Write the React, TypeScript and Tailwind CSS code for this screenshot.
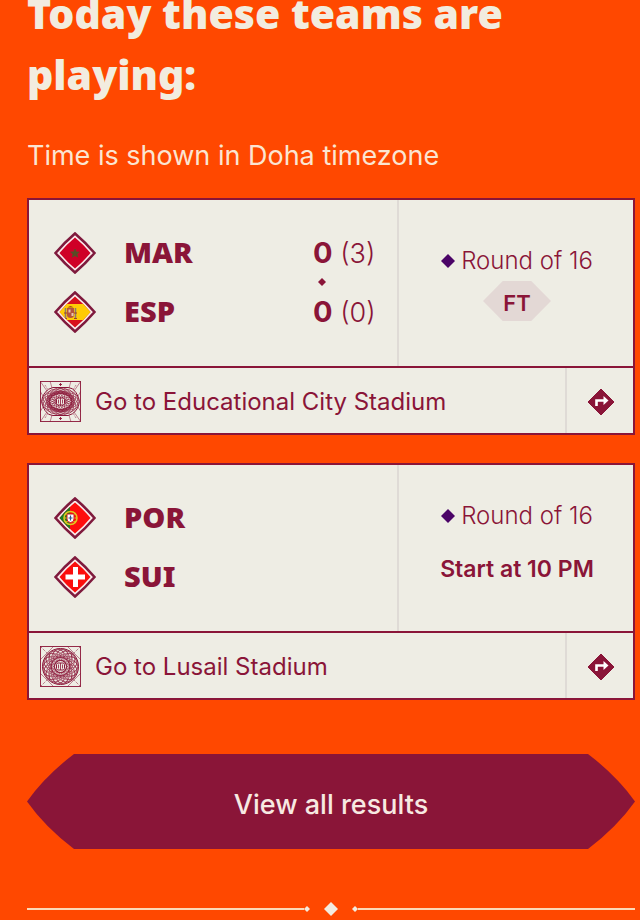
import type { ReactNode } from 'react';

type TeamCode = 'MAR' | 'ESP' | 'POR' | 'SUI';
type StadiumShape = 'oval' | 'round';

interface Team {
  code: TeamCode;
  goals?: number;
  penalties?: number;
}

interface Match {
  teams: [Team, Team];
  round: string;
  startsAt?: string;
  stadium: string;
  shape: StadiumShape;
}

const MATCHES: Match[] = [
  {
    teams: [
      { code: 'MAR', goals: 0, penalties: 3 },
      { code: 'ESP', goals: 0, penalties: 0 },
    ],
    round: 'Round of 16',
    stadium: 'Educational City Stadium',
    shape: 'oval',
  },
  {
    teams: [{ code: 'POR' }, { code: 'SUI' }],
    round: 'Round of 16',
    startsAt: '10 PM',
    stadium: 'Lusail Stadium',
    shape: 'round',
  },
];

// Flag artwork, drawn on a 42x42 canvas and clipped to the inner diamond
const FLAGS: Record<TeamCode, ReactNode> = {
  MAR: (
    <>
      <rect width="42" height="42" fill="#cf0027" />
      <path d="M21 17l1.2 2.9 3.1.2-2.4 2 .8 3-2.7-1.6-2.7 1.6.8-3-2.4-2 3.1-.2z" fill="#5c4a26" stroke="#4b5a2a" strokeWidth=".7" />
    </>
  ),
  ESP: (
    <>
      <rect width="42" height="42" fill="#d8101c" />
      <rect y="13" width="42" height="16" fill="#ffcb05" />
      <path d="M13 17h7v7q0 3-3.500 3T13 24z" fill="#b5533c" />
      <path d="M14.500 18.500h2v3h-2zM17.500 22h2v3h-2z" fill="#e8c9b0" />
      <path d="M11.500 17v10M21.500 17v10" stroke="#8a7a70" strokeWidth="1.500" />
      <path d="M10 22h3M20 22h3M10 27.500h3M20 27.500h3" stroke="#a23c2c" />
      <path d="M13.500 16.500q3-3 6 0z" fill="#9a4a1c" />
    </>
  ),
  POR: (
    <>
      <rect width="42" height="42" fill="#ff0d0d" />
      <rect width="16" height="42" fill="#1c7a26" />
      <circle cx="16.500" cy="21" r="6.500" fill="none" stroke="#e0c81e" strokeWidth="1.500" />
      <path d="M10 21h13M11.500 17q5 3 10 0M11.500 25q5-3 10 0" stroke="#e0c81e" fill="none" />
      <path d="M13 17h7v5q0 3.500-3.500 3.500T13 22z" fill="#fff" stroke="#d31b1b" />
      <path d="M16.500 18.500v5M14.500 21h4" stroke="#38508c" strokeWidth="1.200" />
    </>
  ),
  SUI: (
    <>
      <rect width="42" height="42" fill="#fb0d0d" />
      <path d="M19 11h5v7.500h7v5h-7V31h-5v-7.500h-7.500v-5H19z" fill="#fff" />
    </>
  ),
};

function Flag({ code }: { code: TeamCode }) {
  return (
    <svg viewBox="0 0 42 42" className="size-[42px] shrink-0" role="img" aria-label={code}>
      <clipPath id={`flag-${code}`}>
        <path d="M21 5.500Q29.500 12.500 36.500 21Q29.500 29.500 21 36.500Q12.500 29.500 5.500 21Q12.500 12.500 21 5.500z" />
      </clipPath>
      <path d="M21 1.500Q31.500 10.500 40.500 21Q31.500 31.500 21 40.500Q10.500 31.500 1.500 21Q10.500 10.500 21 1.500z" fill="#fbeeee" stroke="#7f1a3d" strokeWidth="2.600" />
      <g clipPath={`url(#flag-${code})`}>{FLAGS[code]}</g>
    </svg>
  );
}

function Diamond({ className }: { className: string }) {
  return (
    <svg viewBox="0 0 14 14" className={`shrink-0 ${className}`} fill="currentColor" aria-hidden="true">
      <path d="M7 0l7 7-7 7-7-7z" />
    </svg>
  );
}

// Woven line pattern, a different outline for each stadium
function StadiumMark({ shape }: { shape: StadiumShape }) {
  const turns = Array.from({ length: 9 }, (_, i) => i * 20);

  return (
    <svg viewBox="0 0 41 41" className="size-[41px] shrink-0" fill="none" stroke="#8a1538" strokeWidth=".5" aria-hidden="true">
      <rect x=".5" y=".5" width="40" height="40" strokeWidth=".9" />
      {shape === 'oval' ? (
        <>
          <path d="M0 0l7 10M0 41l7-10M41 0l-7 10M41 41l-7-10M10 0l2 7M31 0l-2 7M10 41l2-7M31 41l-2-7M0 10l3 5M41 10l-3 5M0 31l3-5M41 31l-3-5" />
          <path d="M5 4l3 5M36 4l-3 5M5 37l3-5M36 37l-3-5" strokeDasharray="2 1" />
          <path d="M13 6.500h15q5 0 8 5t3.500 9q-.5 5-3.500 9t-8 5H13q-5 0-8-5t-3.500-9q.5-5 3.500-9t8-5z" strokeWidth="1" />
          <g transform="translate(20.500 20.500) scale(1.350 1)" strokeWidth=".5">
            {turns.map((turn) => (
              <g key={turn} transform={`rotate(${turn})`}>
                <ellipse rx="13.500" ry="8" />
                <ellipse cx="5.500" rx="5" ry="4" />
                <ellipse cx="-5.500" rx="5" ry="4" />
              </g>
            ))}
          </g>
          <path d="M20.500 2v3M19 3.500h3M20.500 36v3M19 37.500h3" strokeWidth=".9" />
        </>
      ) : (
        <>
          <path d="M0 0l10 10M41 0L31 10M0 41l10-10M41 41L31 31" strokeDasharray="3 1" />
          <path d="M0 14L14 0M27 0l14 14M0 27l14 14M41 27L27 41" />
          <circle cx="20.500" cy="20.500" r="18" strokeWidth="1" />
          <circle cx="20.500" cy="20.500" r="6" strokeWidth="1" />
          <g transform="translate(20.500 20.500)">
            {turns.map((turn) => (
              <g key={turn} transform={`rotate(${turn})`}>
                <circle cx="11.500" r="5.500" />
                <circle cx="-11.500" r="5.500" />
                <ellipse rx="17.500" ry="9" />
              </g>
            ))}
          </g>
        </>
      )}
      <rect x="16.500" y="17" width="8" height="7" rx="1.500" fill="#eeede4" strokeWidth="1" />
      <path d="M20.500 17v7M18.500 18.500v4M22.500 18.500v4" strokeWidth=".8" />
    </svg>
  );
}

function DirectionsIcon() {
  return (
    <svg viewBox="0 0 28 28" className="size-7" aria-hidden="true">
      <path d="M14 1L27 14L14 27L1 14z" fill="#8a1538" stroke="#8a1538" strokeLinejoin="round" />
      <path d="M9.500 18v-5.500H18" fill="none" stroke="#fff" strokeWidth="2.600" />
      <path d="M16.500 8l5 4.500-5 4.500z" fill="#fff" />
    </svg>
  );
}

function TeamRow({ team }: { team: Team }) {
  return (
    <div className="flex h-[59px] items-center">
      <Flag code={team.code} />
      <span className="ml-7 pb-[2px] font-['Noto_Sans',sans-serif] text-[29px] font-black">{team.code}</span>
      {team.goals !== undefined && (
        <span className="ml-auto w-[63px] whitespace-nowrap text-[27px] font-light">
          <b className="text-[29px] font-bold">{team.goals}</b> ({team.penalties})
        </span>
      )}
    </div>
  );
}

function MatchCard({ match }: { match: Match }) {
  const [home, away] = match.teams;

  return (
    <article className="border-2 border-[#8a1538] bg-[#eeede4]">
      <div className="flex h-[166px]">
        <div className="relative flex-1 pt-[23px] pr-[21px] pl-[25px]">
          <TeamRow team={home} />
          {home.goals !== undefined && <Diamond className="absolute top-[78px] right-[71px] size-2" />}
          <TeamRow team={away} />
        </div>
        <div className="flex w-[236px] flex-col items-center border-l-2 border-[#dfdbd6] pl-[2px]">
          <p className={`flex items-center gap-[6px] text-[24px] leading-8 font-light ${match.startsAt ? 'mt-[35px]' : 'mt-[45px]'}`}>
            <Diamond className="size-[14px] text-[#4b0467]" />
            {match.round}
          </p>
          {match.startsAt ? (
            <p className="mt-[21px] text-[23px] leading-8 font-semibold">Start at {match.startsAt}</p>
          ) : (
            <span className="mt-1 flex h-10 w-[68px] items-center justify-center bg-[#e3d8d5] pt-1 text-[22px] font-semibold [clip-path:polygon(0_50%,29%_0,71%_0,100%_50%,71%_100%,29%_100%)]">
              FT
            </span>
          )}
        </div>
      </div>
      <a href="#directions" className="flex h-[67px] border-t-2 border-[#8a1538]">
        <span className="flex flex-1 items-center gap-[14px] pt-[2px] pl-[11px] text-[24px]">
          <StadiumMark shape={match.shape} />
          Go to {match.stadium}
        </span>
        <span className="flex w-[68px] items-center justify-center border-l-2 border-[#dfdbd6] pt-[2px] pl-[2px]">
          <DirectionsIcon />
        </span>
      </a>
    </article>
  );
}

function Separator() {
  return (
    <div className="flex items-center text-[#f3ebdf]">
      <span className="h-[2px] flex-1 bg-[#fbd9b8]" />
      <Diamond className="size-[6px]" />
      <Diamond className="mx-[14px] size-[14px]" />
      <Diamond className="size-[6px]" />
      <span className="h-[2px] flex-1 bg-[#fbd9b8]" />
    </div>
  );
}

export default function App() {
  return (
    <main className="min-h-screen overflow-hidden bg-[#ff4800] pr-[5px] pl-[27px] font-['Inter',sans-serif] text-[#8a1538]">
      <h1 className="-mt-[17px] font-['Noto_Sans',sans-serif] text-[41px] leading-[61px] font-black text-[#f2ecdf]">
        Today these teams are playing:
      </h1>
      <p className="mt-[31px] text-[27px] leading-10 text-[#fbe5d2]">Time is shown in Doha timezone</p>

      <div className="mt-[22px] flex flex-col gap-7">
        {MATCHES.map((match) => (
          <MatchCard key={match.stadium} match={match} />
        ))}
      </div>

      <button className="mt-[54px] flex h-[95px] w-full text-[27px] font-medium text-[#f7e9e2]">
        <svg viewBox="0 0 47 95" className="h-full w-[47px] shrink-0" fill="#8a1538" aria-hidden="true">
          <path d="M47 0Q18 22 0 47.500Q18 73 47 95z" />
        </svg>
        <span className="flex h-full flex-1 items-center justify-center bg-[#8a1538] pt-2">View all results</span>
        <svg viewBox="0 0 47 95" className="h-full w-[47px] shrink-0" fill="#8a1538" aria-hidden="true">
          <path d="M0 0Q29 22 47 47.500Q29 73 0 95z" />
        </svg>
      </button>

      <div className="mt-[53px] pb-1">
        <Separator />
      </div>
    </main>
  );
}
